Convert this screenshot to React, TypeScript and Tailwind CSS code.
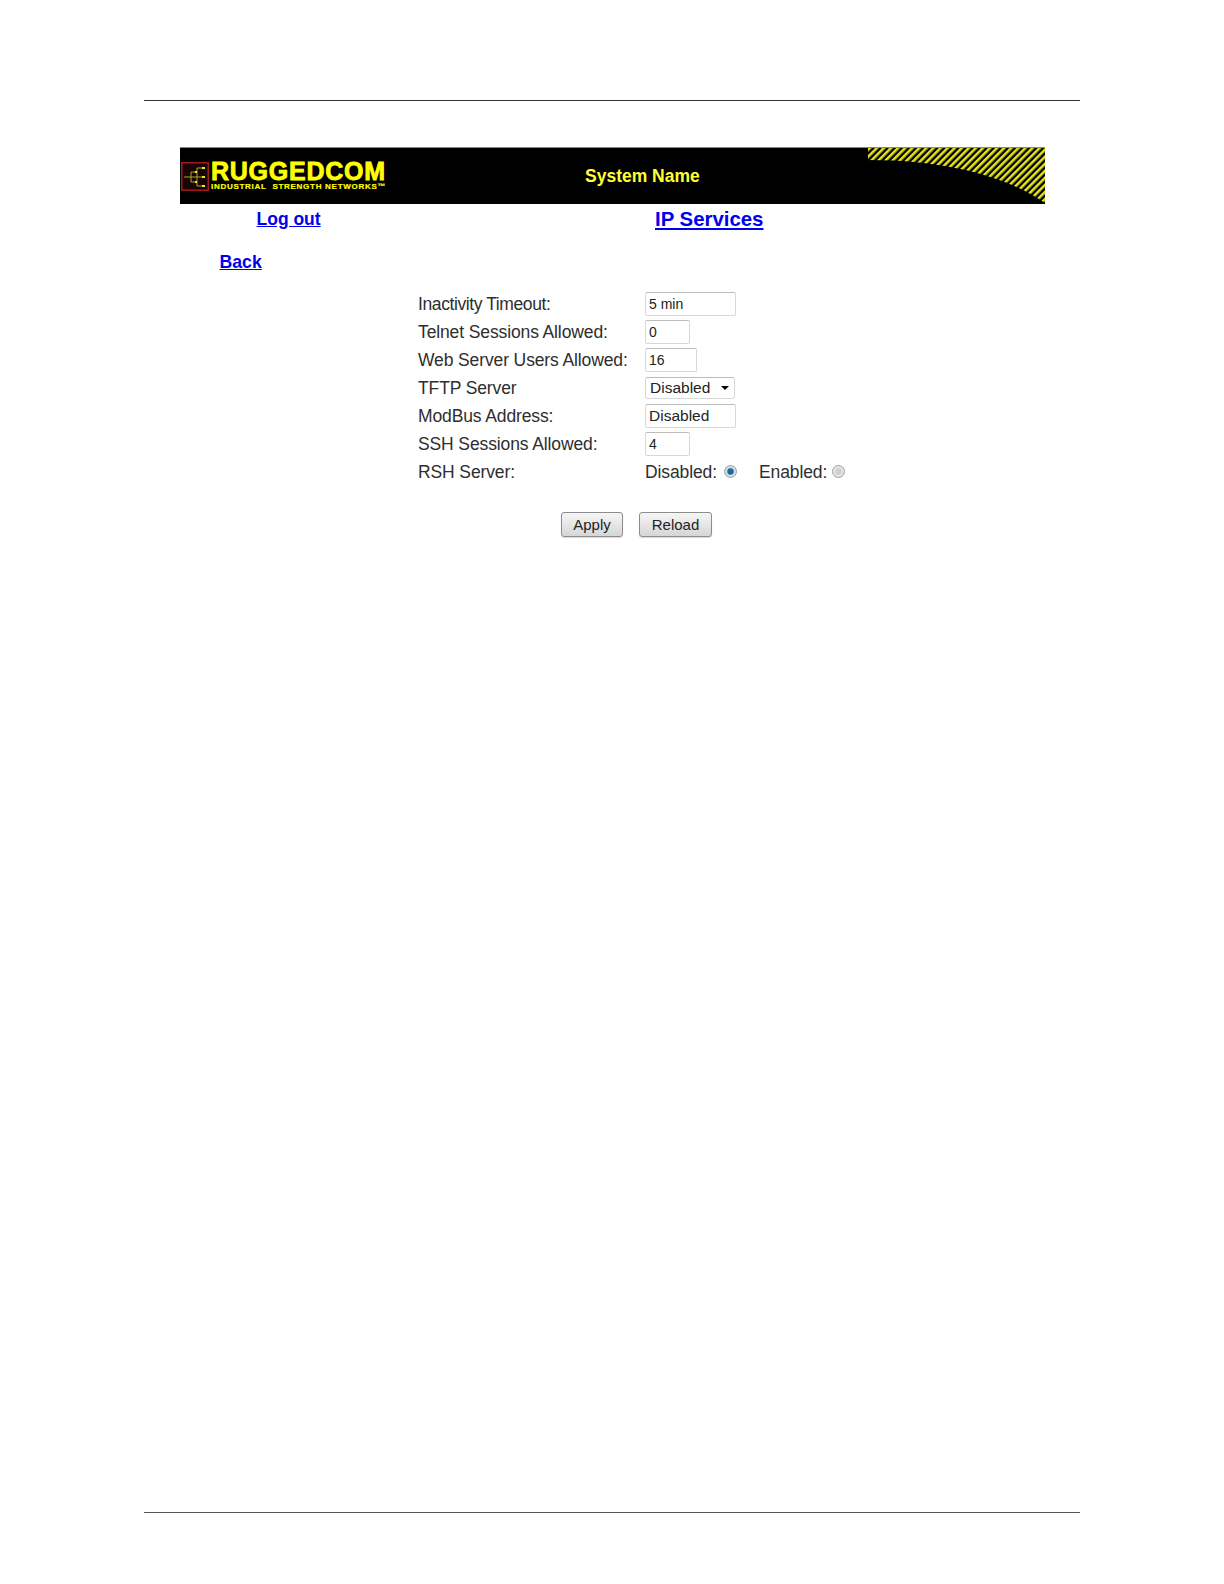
const LABEL = "text-[17.5px] leading-[20px] text-[#2e2e2e]";
const INPUT =
  "h-[24px] px-[3px] text-[14px] leading-[20px] text-[#222] border border-[#d8d8d8] border-t-[#bcbcbc] rounded-[2px] bg-white flex items-center";
const BUTTON =
  "h-[25px] rounded-[3px] border border-[#8c8c8c] bg-gradient-to-b from-[#f6f6f6] to-[#d6d6d6] text-[15px] text-[#222] shadow-[0_1px_1px_rgba(0,0,0,0.15)]";
const LINK = "leading-[22px] font-bold text-[#0000ee] underline";

function Field({ label, tight, children }: { label: string; tight?: boolean; children: React.ReactNode }) {
  return (
    <>
      <div className={`${LABEL} flex items-center h-[28px] ${tight ? "tracking-[-0.4px]" : "tracking-[-0.12px]"}`}>{label}</div>
      <div className="flex items-center h-[28px]">{children}</div>
    </>
  );
}

function Radio({ checked }: { checked?: boolean }) {
  return (
    <svg className="block -mt-[1px]" width="13" height="13" viewBox="0 0 13 13" aria-hidden="true">
      <circle cx="6.5" cy="6.5" r="6" fill={checked ? "#cfdde8" : "#e4e4e4"} stroke="#a0a0a0" />
      <circle cx="6.5" cy="6.5" r="3.2" fill={checked ? "#1b6a99" : "#cfcfcf"} />
    </svg>
  );
}

function Logo() {
  return (
    <div className="flex items-center w-[405px] pl-[1px]">
      <svg className="block" width="28" height="29" viewBox="0 0 28 29" aria-hidden="true">
        <rect x="0.75" y="0.75" width="26.5" height="27.5" fill="#180404" stroke="#a01c1c" strokeWidth="1.5" />
        <path
          d="M3 15H16M10 10V20M10 10H16M10 20H16M16 6V24M16 6H22M16 15H22M16 24H22"
          fill="none"
          stroke="#a8a820"
          strokeWidth="1"
        />
        <path d="M21 5h3v2h-3zM21 14h3v2h-3zM21 23h3v2h-3zM14 9h2v2h-2zM14 19h2v2h-2z" fill="#e8e820" />
      </svg>
      <div className="ml-[2px] mt-[1px] flex flex-col font-bold text-[#ffff00]">
        <span className="text-[25px] leading-[21px] tracking-[0.75px] [-webkit-text-stroke:0.8px_#ffff00]">RUGGEDCOM</span>
        <span className="text-[8px] leading-[10px] tracking-[0.72px] whitespace-pre [-webkit-text-stroke:0.2px_#ffff00]">INDUSTRIAL  STRENGTH NETWORKS™</span>
      </div>
    </div>
  );
}

function Stripes() {
  return (
    <svg className="absolute right-0 top-0" width="177" height="56" viewBox="0 0 177 56" aria-hidden="true">
      <defs>
        <pattern id="hatch" width="5" height="5" patternUnits="userSpaceOnUse" patternTransform="rotate(45)">
          <rect width="5" height="5" fill="#000" />
          <rect width="2.6" height="5" fill="#e4e41c" />
        </pattern>
      </defs>
      <path d="M0 0H177V55C150 36 95 12 0 12Z" fill="url(#hatch)" />
    </svg>
  );
}

export default function App() {
  return (
    <div className="w-[1224px] h-[1584px] bg-white flex flex-col font-['Liberation_Sans',Arial,sans-serif]">
      <div className="ml-[144px] mt-[100px] w-[936px] h-px bg-[#333]" />

      <div className="relative ml-[180px] mt-[46px] w-[865px] h-[57px] bg-black flex items-center border-t border-[#888]">
        <Logo />
        <span className="text-[17.5px] leading-[20px] font-bold text-[#ffff33]">System Name</span>
        <Stripes />
      </div>

      <div className="flex items-center ml-[256.5px] mt-[4px] h-[22px]">
        <a className={`${LINK} text-[17.5px] w-[398.5px]`}>Log out</a>
        <a className={`${LINK} text-[20.4px]`}>IP Services</a>
      </div>

      <div className="ml-[219.5px] mt-[21px] h-[22px]">
        <a className={`${LINK} text-[17.7px]`}>Back</a>
      </div>

      <div className="ml-[418px] mt-[17px] grid grid-cols-[227px_1fr] w-[500px]">
        <Field label="Inactivity Timeout:" tight>
          <div className={`${INPUT} w-[91px]`}>5 min</div>
        </Field>
        <Field label="Telnet Sessions Allowed:">
          <div className={`${INPUT} w-[45px]`}>0</div>
        </Field>
        <Field label="Web Server Users Allowed:">
          <div className={`${INPUT} w-[52px]`}>16</div>
        </Field>
        <Field label="TFTP Server">
          <div className={`${INPUT} w-[90px] !h-[22px] justify-between rounded-[3px] !text-[15.5px]`}>
            <span className="pl-[1px]">Disabled</span>
            <span className="mr-[2px] w-0 h-0 border-x-[4px] border-x-transparent border-t-[4px] border-t-black" />
          </div>
        </Field>
        <Field label="ModBus Address:">
          <div className={`${INPUT} w-[91px] !text-[15.5px]`}>Disabled</div>
        </Field>
        <Field label="SSH Sessions Allowed:">
          <div className={`${INPUT} w-[45px]`}>4</div>
        </Field>
        <Field label="RSH Server:">
          <div className="flex items-center tracking-[-0.12px]">
            <span className={`${LABEL} w-[79px]`}>Disabled:</span>
            <Radio checked />
            <span className={`${LABEL} ml-[22px] w-[73px]`}>Enabled:</span>
            <Radio />
          </div>
        </Field>
      </div>

      <div className="ml-[561px] mt-[26px] flex gap-[16px]">
        <button className={`${BUTTON} w-[62px] pt-[1px]`}>Apply</button>
        <button className={`${BUTTON} w-[73px] pt-[1px]`}>Reload</button>
      </div>

      <div className="flex-1" />
      <div className="ml-[144px] mb-[71px] w-[936px] h-px bg-[#555]" />
    </div>
  );
}
